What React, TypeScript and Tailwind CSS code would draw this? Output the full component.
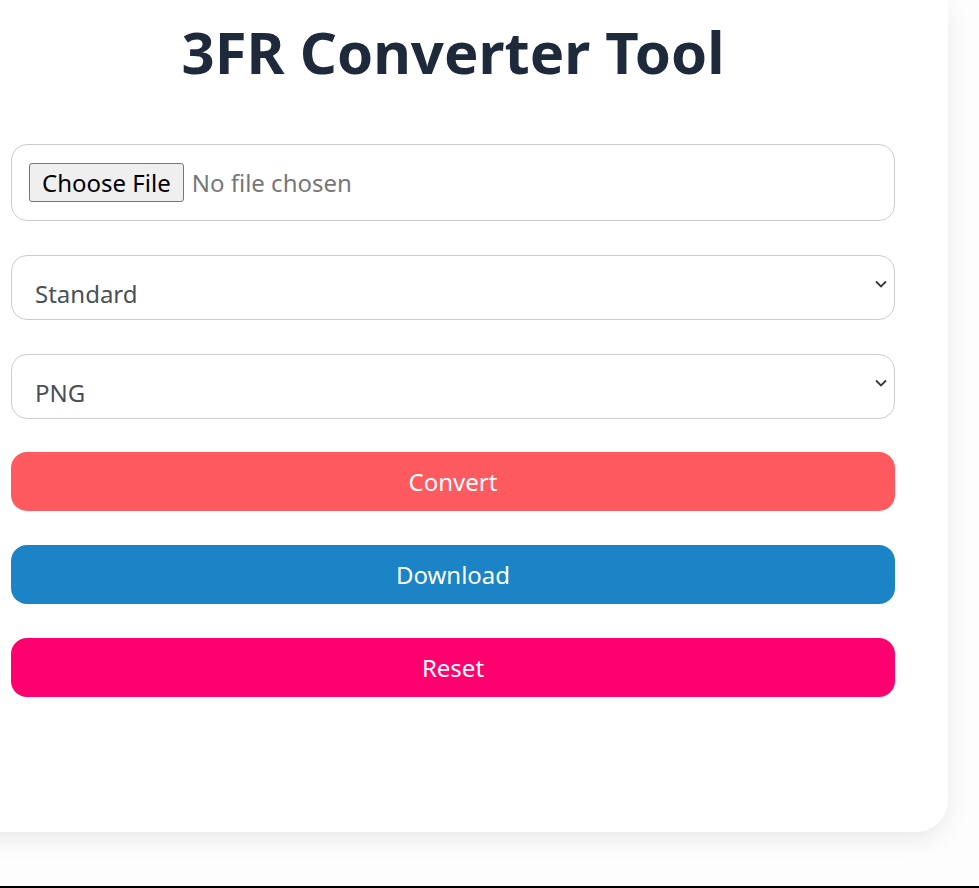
export default function App() {
  const sel = "flex h-[65px] items-center justify-between rounded-2xl border border-[#ccc] bg-white pl-[23px] pr-[6px] text-[24px] text-[#495057] [font-family:'Open_Sans',sans-serif]";
  const btn = "flex h-[59px] items-center justify-center rounded-2xl text-[24px] text-white [font-family:'Liberation_Sans',Arial,sans-serif]";
  const Chev = () => (
    <svg width="14" height="10" viewBox="0 0 14 10" className="mt-[-8px]">
      <path d="M2 2.5l5 5 5-5" fill="none" stroke="#343a40" strokeWidth="1.8" />
    </svg>
  );
  return (
    <div className="min-h-[888px] w-[979px] overflow-hidden bg-[#fdfdfd] border-b-2 border-black h-[888px]">
      <div className="-ml-[40px] w-[988px] rounded-br-[32px] bg-white pl-[51px] pr-[53px] pt-[18px] pb-[135px] shadow-[0_8px_24px_rgba(0,0,0,0.08)]">
        <h1 className="text-center text-[58px] font-bold leading-[68px] text-[#1e293b] [font-family:'Liberation_Sans',Arial,sans-serif]">3FR Converter Tool</h1>
        <div className="mt-[58px] flex h-[77px] items-center rounded-2xl border border-[#ccc] bg-white pl-[17px]">
          <span className="rounded-[3px] border border-[#767676] bg-[#efefef] px-[12px] text-[24px] leading-[37px] text-black [font-family:'Liberation_Sans',Arial,sans-serif]">Choose File</span>
          <span className="ml-[8px] text-[24px] text-[#777] [font-family:'Open_Sans',sans-serif]">No file chosen</span>
        </div>
        <div className={"mt-[34px] " + sel}><span className="mt-[12px]">Standard</span><Chev /></div>
        <div className={"mt-[34px] " + sel}><span className="mt-[12px]">PNG</span><Chev /></div>
        <div className={"mt-[33px] bg-[#ff5a5f] " + btn}>Convert</div>
        <div className={"mt-[34px] bg-[#1a84c6] " + btn}>Download</div>
        <div className={"mt-[34px] bg-[#ff006e] " + btn}>Reset</div>
      </div>
    </div>
  );
}
